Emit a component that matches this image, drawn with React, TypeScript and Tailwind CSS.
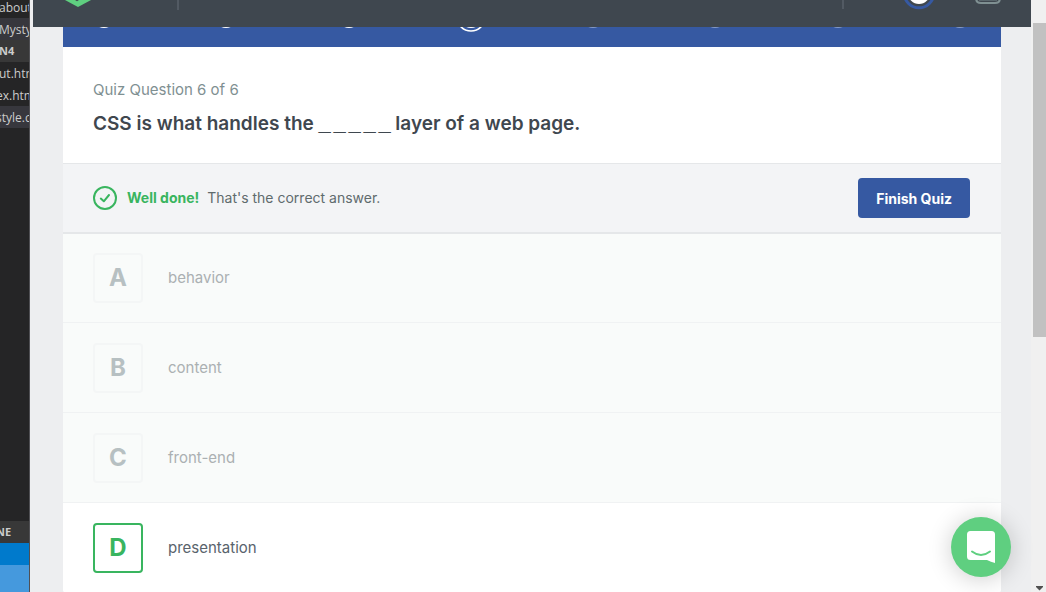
import type { ReactNode } from 'react'

type Answer = { letter: string; text: string; correct?: boolean }

const answers: Answer[] = [
  { letter: 'A', text: 'behavior' },
  { letter: 'B', text: 'content' },
  { letter: 'C', text: 'front-end' },
  { letter: 'D', text: 'presentation', correct: true },
]

const steps = ['done', 'done', 'done', 'current', 'todo', 'todo', 'todo', 'todo'] as const

function FileRow({ children, className = '' }: { children: ReactNode; className?: string }) {
  return (
    <div className={`flex h-[22px] shrink-0 items-center overflow-hidden whitespace-nowrap ${className}`}>
      {children}
    </div>
  )
}

function EditorStrip() {
  return (
    <aside className="flex w-[30px] shrink-0 flex-col overflow-hidden border-r border-[#505054] bg-[#252526] font-['Open_Sans',sans-serif] text-[12px] leading-4 text-[#cccccc]">
      <div className="flex h-[18px] shrink-0 items-start overflow-hidden whitespace-nowrap">
        <span className="-ml-px">about</span>
      </div>
      <FileRow className="bg-[#37373d] pt-px">
        <span className="-ml-px">Mysty</span>
      </FileRow>
      <FileRow className="bg-[#383838] text-[11px] font-bold">
        <span className="-ml-px">N4</span>
      </FileRow>
      <FileRow className="pt-px">
        <span className="-ml-px">ut.htm</span>
      </FileRow>
      <FileRow className="pt-px">
        <span className="-ml-1">ex.htm</span>
      </FileRow>
      <FileRow className="bg-[#37373d] pt-px">
        <span className="-ml-1">style.c</span>
      </FileRow>
      <div className="flex-1" />
      <FileRow className="bg-[#383838] text-[11px] font-bold">
        <span className="-ml-1">NE</span>
      </FileRow>
      <div className="h-[22px] shrink-0 bg-[#007acc]" />
      <div className="h-[27px] shrink-0 bg-[#4599dd]" />
    </aside>
  )
}

function TopBar() {
  return (
    <header className="flex h-[27px] shrink-0 items-start overflow-hidden bg-[#3f474f] pr-[30px] pl-[31px]">
      <a href="#home" aria-label="Home">
        <svg width="28" height="8" viewBox="0 0 28 8" className="block">
          <path d="M0 -0.5L14 7L28 -0.5Z" fill="#5fcf80" />
          <path d="M9.5 -1L13 1.2L16.5 -1Z" fill="#3f474f" />
        </svg>
      </a>
      <div className="ml-[85px] h-[10px] w-[2px] bg-[#525a63]" />
      <div className="flex-1" />
      <div className="h-[9px] w-[2px] bg-[#525a63]" />
      <button type="button" aria-label="Profile" className="ml-[59px]">
        <svg width="32" height="10" viewBox="0 0 32 10" className="block">
          <circle cx="16" cy="-7" r="14.8" fill="none" stroke="#3659a2" strokeWidth="3" />
          <circle cx="16" cy="-7" r="11" fill="#fff" />
        </svg>
      </button>
      <button type="button" aria-label="Library" className="ml-[40px]">
        <svg width="26" height="5" viewBox="0 0 26 5" className="block">
          <path d="M1.2 -1C1.2 1.8 3.5 3 6 3H20C22.5 3 24.8 1.8 24.8 -1" fill="none" stroke="#7f9092" strokeWidth="2" />
          <path d="M4 0.2H22" stroke="#66757a" strokeWidth="1" />
        </svg>
      </button>
    </header>
  )
}

function Progress() {
  return (
    <div className="flex h-5 items-start justify-between overflow-hidden bg-[#3659a2] px-[26px]">
      {steps.map((state, i) => (
        <svg key={i} width="30" height="6" viewBox="0 0 30 6" className="block">
          {state === 'current' && (
            <circle cx="15" cy="-10" r="14" fill="none" stroke="#fff" strokeWidth="1.6" />
          )}
          <circle cx="15" cy="-10" r="11" fill="#fff" opacity={state === 'todo' ? 0.4 : 1} />
        </svg>
      ))}
    </div>
  )
}

function Blank() {
  return (
    <span className="inline-flex gap-[3px] font-['Liberation_Sans',sans-serif] text-[22px] leading-none font-bold">
      {[0, 1, 2, 3, 4].map((n) => (
        <span key={n} className="w-3">
          _
        </span>
      ))}
    </span>
  )
}

function AnswerRow({ letter, text, correct }: Answer) {
  return (
    <li className={correct ? 'bg-white' : 'border-b border-[#f0f2f3] bg-[#f9fbfa] first:shadow-[inset_0_1px_0_#e5e7e9]'}>
      <button
        type="button"
        disabled={!correct}
        className={`flex w-full items-center gap-[25px] px-[30px] pt-5 text-left ${correct ? 'pb-5' : 'pb-[19px]'}`}
      >
        <span
          className={`flex size-[50px] items-center justify-center rounded border-2 text-[24px] font-bold ${
            correct ? 'border-[#39b55f] text-[#39b55f]' : 'border-[#f4f6f6] text-[#b7c0c2]'
          }`}
        >
          {letter}
        </span>
        <span className={`pb-px text-[15px] leading-5 ${correct ? 'text-[#59636c]' : 'text-[#abb0b2]'}`}>
          {text}
        </span>
      </button>
    </li>
  )
}

export default function App() {
  return (
    <div className="relative flex h-screen overflow-hidden bg-[#edeef0] font-['Inter',sans-serif]">
      <EditorStrip />
      <div className="ml-[3px] flex min-w-0 flex-1 flex-col">
        <TopBar />
        <main className="min-h-0 flex-1 overflow-hidden px-[30px]">
          <div className="overflow-hidden rounded-b bg-white">
            <Progress />
            <section className="flex h-[116px] flex-col px-[30px] pt-[33px]">
              <p className="text-[15px] leading-5 text-[#7f9092]">Quiz Question 6 of 6</p>
              <h1 className="mt-3 text-[19px] leading-6 font-semibold whitespace-nowrap text-[#3f474f]">
                CSS is what handles the <Blank /> layer of a web page.
              </h1>
            </section>
            <section className="flex h-[70px] items-center border-y border-[#e5e7e9] bg-[#f3f4f6] px-[30px] pr-[31px]">
              <svg width="24" height="24" viewBox="0 0 24 24" fill="none" stroke="#39b55f" className="shrink-0">
                <circle cx="12" cy="12" r="11" strokeWidth="2" />
                <path d="M7.8 12.6L10.8 15.3L16 9" strokeWidth="2" strokeLinecap="round" strokeLinejoin="round" />
              </svg>
              <p className="ml-[10px] flex-1 pb-[2px] text-[14px] text-[#5f6b6d]">
                <strong className="mr-1 font-bold text-[#39b55f]">Well done!</strong> That's the correct answer.
              </p>
              <button type="button" className="h-10 rounded bg-[#3659a2] px-[18px] text-[14px] font-bold text-white">
                Finish Quiz
              </button>
            </section>
            <ul>
              {answers.map((a) => (
                <AnswerRow key={a.letter} {...a} />
              ))}
            </ul>
          </div>
        </main>
      </div>
      <div className="flex w-[15px] shrink-0 flex-col bg-[#f0f0f0] pt-[23px] pl-[2px]">
        <div className="h-[314px] bg-[#c1c1c1]" />
        <div className="flex-1" />
        <svg width="13" height="8" viewBox="0 0 13 8" className="block">
          <path d="M3 2H10V3L6.5 6.5L3 3Z" fill="#505050" />
        </svg>
      </div>
      <button
        type="button"
        aria-label="Open chat"
        className="absolute right-[35px] bottom-[15px] flex size-[60px] items-center justify-center rounded-full bg-[#5fcf80] shadow-[0_2px_24px_rgba(0,0,0,0.2)]"
      >
        <svg width="28" height="32" viewBox="0 0 28 32">
          <path d="M3.5 0H24.5Q28 0 28 3.5V32Q24 31 20 29H3.5Q0 29 0 25.5V3.5Q0 0 3.5 0Z" fill="#fff" />
          <path d="M5 20.5Q14 27.5 23 20.5" fill="none" stroke="#5fcf80" strokeWidth="2" strokeLinecap="round" />
        </svg>
      </button>
    </div>
  )
}
